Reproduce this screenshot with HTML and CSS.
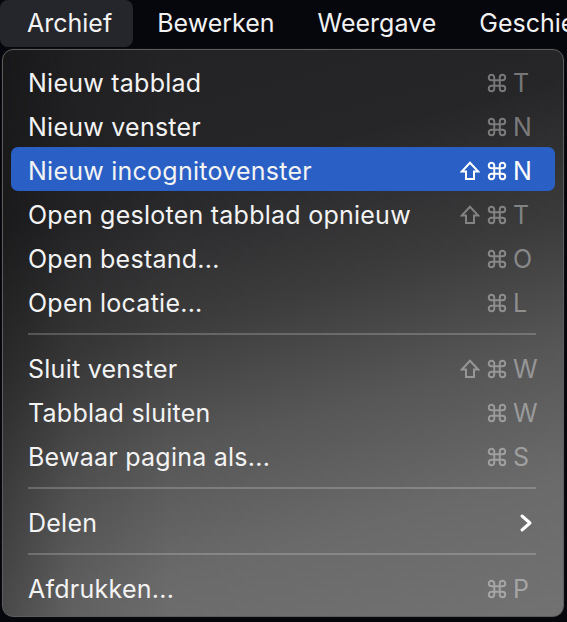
FILE: index.html
```html
<!DOCTYPE html>
<html lang="nl">
<head>
<meta charset="utf-8">
<title>Archief menu</title>
<link rel="stylesheet" href="styles.css">
</head>
<body>
<div class="menubar">
  <span class="mb-item active">Archief</span>
  <span class="mb-item">Bewerken</span>
  <span class="mb-item">Weergave</span>
  <span class="mb-item">Geschiedenis</span>
</div>
<div class="menu">
  <div class="row"><span class="label">Nieuw tabblad</span><span class="sc"><span class="mods"><svg class="cmd" viewBox="0 0 24 24"><path d="M15 6v12a3 3 0 1 0 3-3H6a3 3 0 1 0 3 3V6a3 3 0 1 0-3 3h12a3 3 0 1 0-3-3"/></svg></span><span class="key">T</span></span></div>
  <div class="row"><span class="label">Nieuw venster</span><span class="sc"><span class="mods"><svg class="cmd" viewBox="0 0 24 24"><path d="M15 6v12a3 3 0 1 0 3-3H6a3 3 0 1 0 3 3V6a3 3 0 1 0-3 3h12a3 3 0 1 0-3-3"/></svg></span><span class="key">N</span></span></div>
  <div class="row selected"><span class="label">Nieuw incognitovenster</span><span class="sc"><span class="mods"><svg class="shift" viewBox="0 0 20 20"><path d="M10 1.8 L1.8 10.5 H6 V18 H14 V10.5 H18.2 Z"/></svg><svg class="cmd" viewBox="0 0 24 24"><path d="M15 6v12a3 3 0 1 0 3-3H6a3 3 0 1 0 3 3V6a3 3 0 1 0-3 3h12a3 3 0 1 0-3-3"/></svg></span><span class="key">N</span></span></div>
  <div class="row"><span class="label">Open gesloten tabblad opnieuw</span><span class="sc"><span class="mods"><svg class="shift" viewBox="0 0 20 20"><path d="M10 1.8 L1.8 10.5 H6 V18 H14 V10.5 H18.2 Z"/></svg><svg class="cmd" viewBox="0 0 24 24"><path d="M15 6v12a3 3 0 1 0 3-3H6a3 3 0 1 0 3 3V6a3 3 0 1 0-3 3h12a3 3 0 1 0-3-3"/></svg></span><span class="key">T</span></span></div>
  <div class="row"><span class="label">Open bestand...</span><span class="sc"><span class="mods"><svg class="cmd" viewBox="0 0 24 24"><path d="M15 6v12a3 3 0 1 0 3-3H6a3 3 0 1 0 3 3V6a3 3 0 1 0-3 3h12a3 3 0 1 0-3-3"/></svg></span><span class="key">O</span></span></div>
  <div class="row"><span class="label">Open locatie...</span><span class="sc"><span class="mods"><svg class="cmd" viewBox="0 0 24 24"><path d="M15 6v12a3 3 0 1 0 3-3H6a3 3 0 1 0 3 3V6a3 3 0 1 0-3 3h12a3 3 0 1 0-3-3"/></svg></span><span class="key">L</span></span></div>
  <div class="sep"></div>
  <div class="row"><span class="label">Sluit venster</span><span class="sc"><span class="mods"><svg class="shift" viewBox="0 0 20 20"><path d="M10 1.8 L1.8 10.5 H6 V18 H14 V10.5 H18.2 Z"/></svg><svg class="cmd" viewBox="0 0 24 24"><path d="M15 6v12a3 3 0 1 0 3-3H6a3 3 0 1 0 3 3V6a3 3 0 1 0-3 3h12a3 3 0 1 0-3-3"/></svg></span><span class="key">W</span></span></div>
  <div class="row"><span class="label">Tabblad sluiten</span><span class="sc"><span class="mods"><svg class="cmd" viewBox="0 0 24 24"><path d="M15 6v12a3 3 0 1 0 3-3H6a3 3 0 1 0 3 3V6a3 3 0 1 0-3 3h12a3 3 0 1 0-3-3"/></svg></span><span class="key">W</span></span></div>
  <div class="row"><span class="label">Bewaar pagina als...</span><span class="sc"><span class="mods"><svg class="cmd" viewBox="0 0 24 24"><path d="M15 6v12a3 3 0 1 0 3-3H6a3 3 0 1 0 3 3V6a3 3 0 1 0-3 3h12a3 3 0 1 0-3-3"/></svg></span><span class="key">S</span></span></div>
  <div class="sep"></div>
  <div class="row"><span class="label">Delen</span><span class="chev"><svg width="14" height="20" viewBox="0 0 14 20"><path d="M3 3 L11 10 L3 17" fill="none" stroke="#fff" stroke-width="3" stroke-linecap="round" stroke-linejoin="round"/></svg></span></div>
  <div class="sep"></div>
  <div class="row"><span class="label">Afdrukken...</span><span class="sc"><span class="mods"><svg class="cmd" viewBox="0 0 24 24"><path d="M15 6v12a3 3 0 1 0 3-3H6a3 3 0 1 0 3 3V6a3 3 0 1 0-3 3h12a3 3 0 1 0-3-3"/></svg></span><span class="key">P</span></span></div>
</div>
</body>
</html>
```

FILE: styles.css
```css
html, body {
  margin: 0;
  padding: 0;
}
body {
  width: 567px;
  height: 622px;
  overflow: hidden;
  background: #05070d;
  font-family: Inter, "Liberation Sans", sans-serif;
  color: #f2f2f2;
}
.menubar {
  height: 47px;
  display: flex;
  align-items: center;
  white-space: nowrap;
  overflow: hidden;
  font-size: 25px;
}
.mb-item {
  height: 47px;
  line-height: 46px;
  padding: 0 19px 0 24px;
  flex: none;
}
.mb-item.active {
  background: #24262b;
  border-radius: 8px;
  padding: 0 21px 0 27px;
}
.menu {
  margin: 2px 3px 0 2px;
  height: 568px;
  box-sizing: border-box;
  border-radius: 11px;
  border: 1px solid #5c5c5e;
  box-shadow: 0 0 0 1px #0c0c0e;
  padding: 9px 8px 8px 8px;
  background:
    linear-gradient(90deg, rgba(0,0,0,0.30) 0%, rgba(0,0,0,0.10) 12%, rgba(0,0,0,0) 30%),
    linear-gradient(165deg, #222224 0%, #262628 25%, #3c3c3d 45%, #565657 62%, #6a6a6a 80%, #727272 100%);
  font-size: 25px;
}
.row {
  height: 44px;
  box-sizing: border-box;
  display: flex;
  align-items: center;
  justify-content: space-between;
  padding: 3px 20px 0 17px;
  border-radius: 7px;
  white-space: nowrap;
}
.row.selected {
  background: #2a60c5;
}
.label {
  color: #f3f3f3;
  letter-spacing: 0.25px;
}
.sc {
  display: flex;
  align-items: center;
  color: rgba(255,255,255,0.38);
}
.row.selected .sc {
  color: #ffffff;
}
.mods {
  display: flex;
  align-items: center;
  gap: 6px;
  margin-top: 1px;
}
.cmd {
  width: 22px;
  height: 22px;
  fill: none;
  stroke: currentColor;
  stroke-width: 2.1;
}
.shift {
  width: 20px;
  height: 20px;
  fill: none;
  stroke: currentColor;
  stroke-width: 2;
  stroke-linejoin: miter;
}
.key {
  width: 22px;
  margin-left: 5px;
  text-align: left;
}
.chev {
  display: flex;
  margin-right: 2px;
}
.sep {
  height: 2px;
  margin: 10px 19px 10px 17px;
  background: rgba(255,255,255,0.2);
}
```
